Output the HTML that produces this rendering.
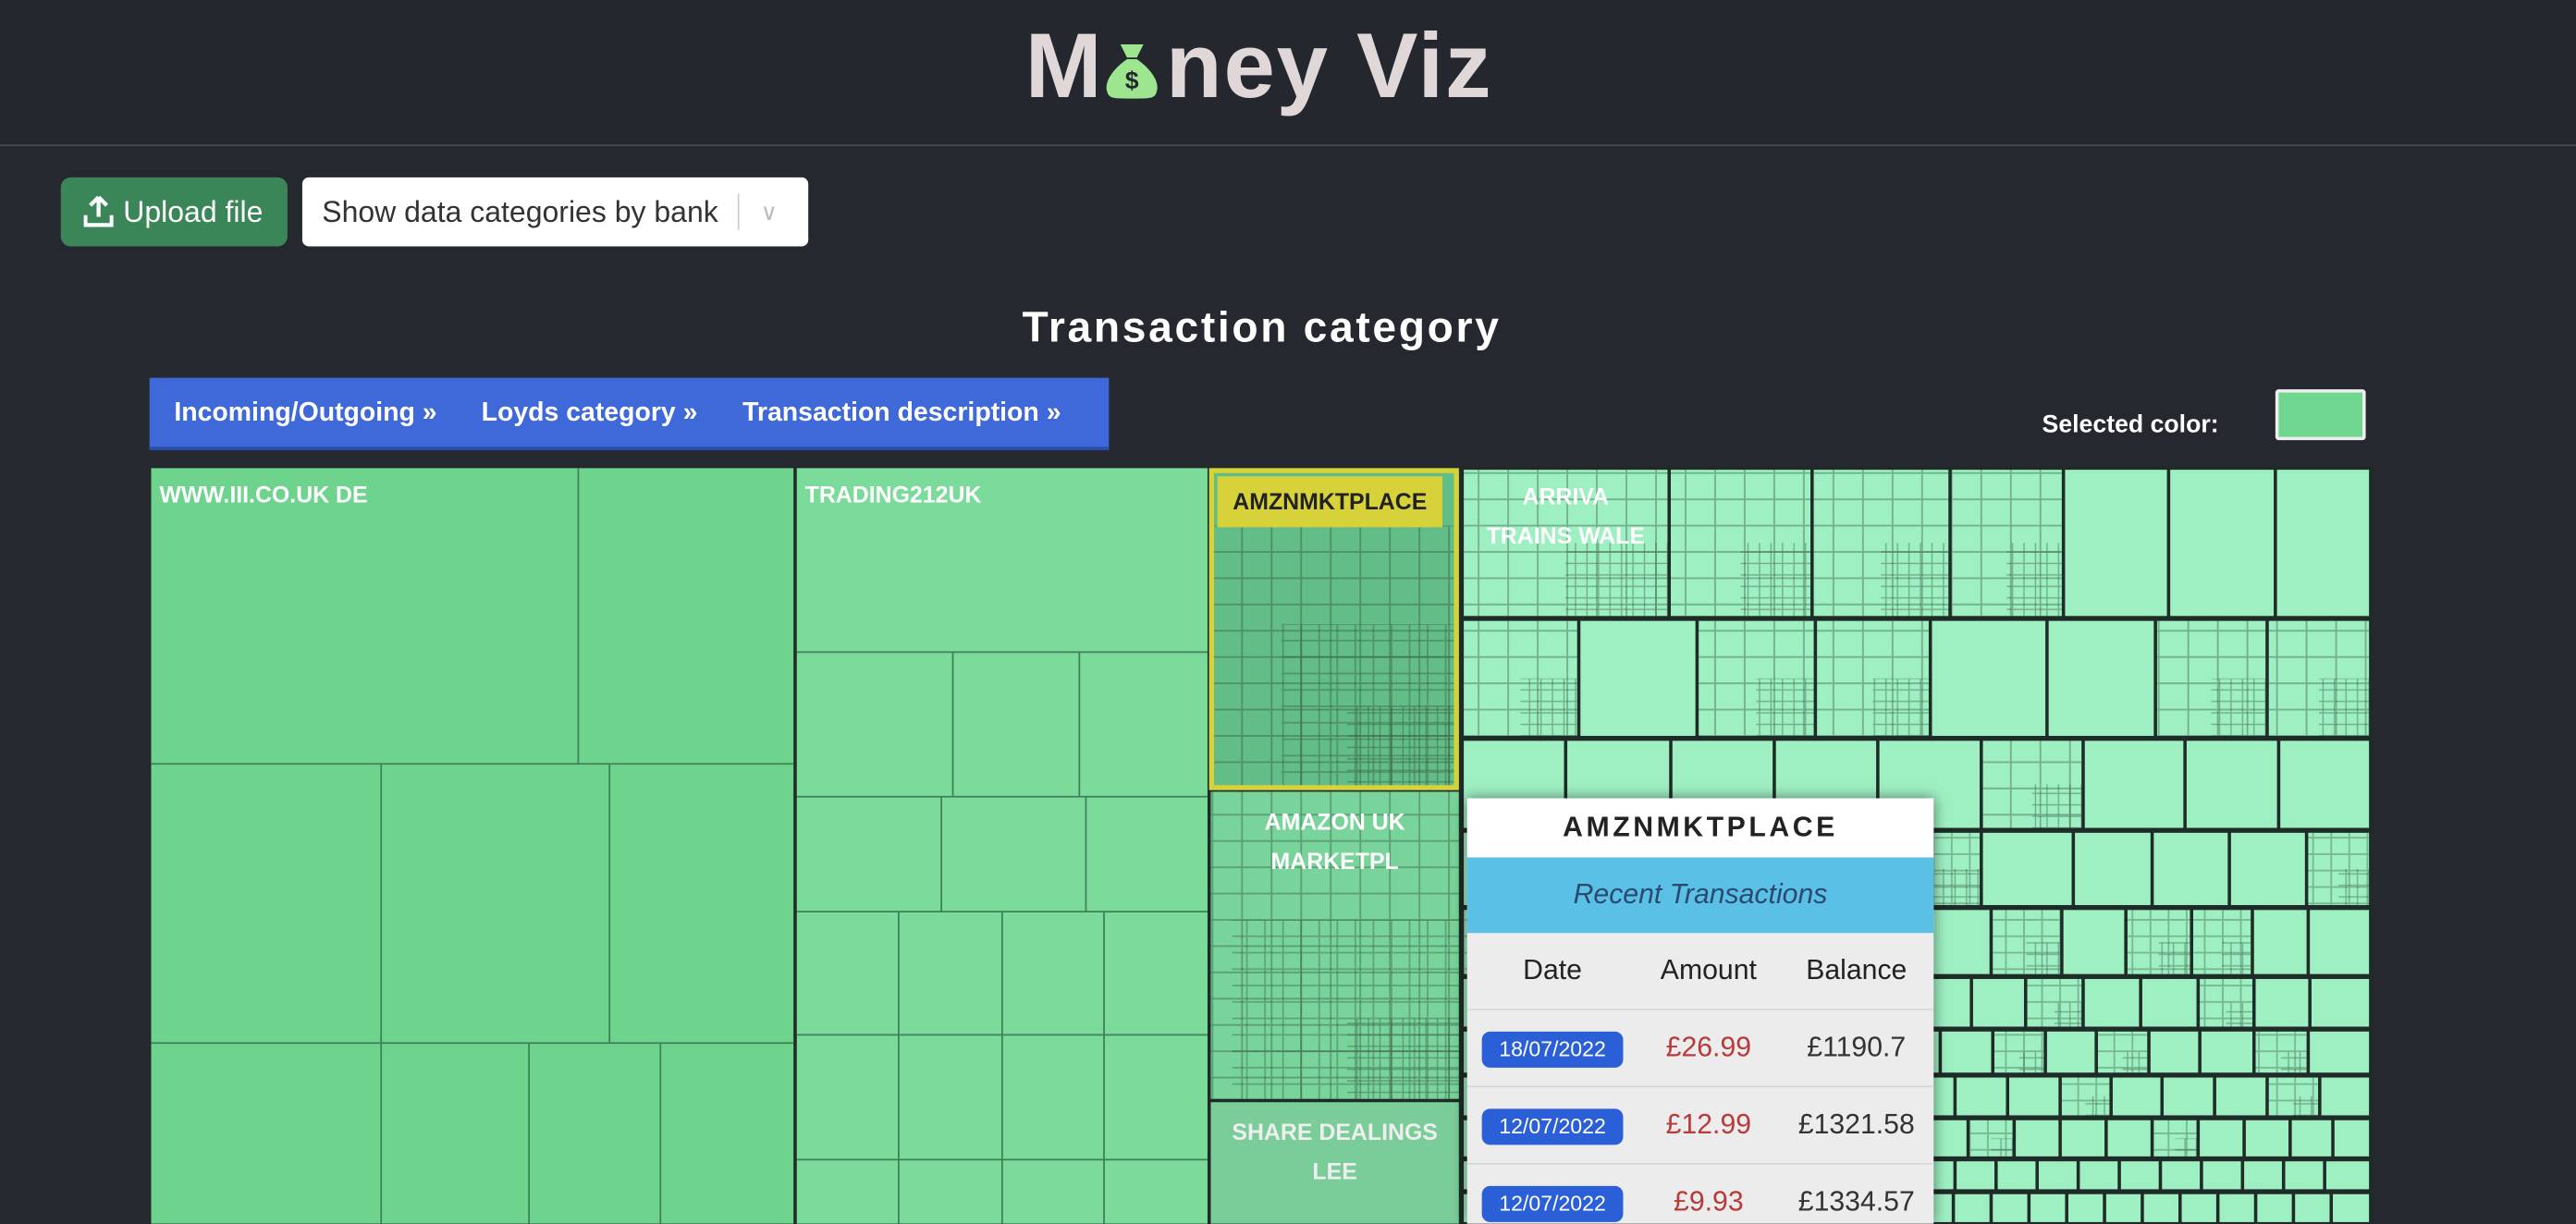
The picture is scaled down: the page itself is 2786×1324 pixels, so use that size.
<!DOCTYPE html>
<html><head><meta charset="utf-8">
<style>
html,body{margin:0;padding:0;background:#262830;overflow:hidden;width:2786px;height:1324px}
#w{position:absolute;left:0;top:0;width:1568px;height:745px;transform:scale(1.77679);transform-origin:0 0;font-family:"Liberation Sans",sans-serif;background:#262830}
.abs{position:absolute}
</style></head><body>
<div id="w">
  <div class="abs" style="left:0;top:0;width:1568px;height:88px;border-bottom:1px solid #4a4c52;background:#25272e"></div>
  <div class="abs" style="left:624px;top:7px;font-size:56px;font-weight:bold;color:#e0d8d8;letter-spacing:1px;white-space:nowrap">M<span style="display:inline-block;width:38px"></span>ney Viz</div>
  <svg class="abs" style="left:670px;top:25px" width="38" height="36" viewBox="0 0 38 36">
    <path d="M12 2 L26 2 L22 10 L16 10 Z" fill="#9de58f"/>
    <path d="M16 11 L22 11 C32 18 36 26 34 31 C33 35 30 35 19 35 C8 35 5 35 4 31 C2 26 6 18 16 11 Z" fill="#9de58f"/>
    <text x="19" y="29" font-family="Liberation Sans" font-weight="bold" font-size="15" text-anchor="middle" fill="#25272e">$</text>
  </svg>

  <div class="abs" style="left:37px;top:108px;width:138px;height:42px;background:#3b8658;border-radius:6px;color:#fff;font-size:18px;line-height:42px">
    <svg class="abs" style="left:14px;top:11px" width="18" height="20" viewBox="0 0 18 20"><path d="M9 1 L4 6 M9 1 L14 6 M9 1 L9 13" stroke="#fff" stroke-width="2.4" fill="none"/><path d="M1 12 L1 18 L17 18 L17 12" stroke="#fff" stroke-width="2.4" fill="none"/></svg>
    <span class="abs" style="left:38px;top:0">Upload file</span></div>
  <div class="abs" style="left:184px;top:108px;width:308px;height:42px;background:#fff;border-radius:4px;color:#333;font-size:18px;line-height:42px">
    <span class="abs" style="left:12px">Show data categories by bank</span>
    <div class="abs" style="left:265px;top:10px;width:1px;height:22px;background:#ccc"></div>
    <span class="abs" style="left:279px;top:0;color:#bbb;font-size:14px">&#8744;</span></div>

  <div class="abs" style="left:0;width:1536px;top:184px;text-align:center;font-size:26px;font-weight:bold;color:#fff;letter-spacing:1.5px">Transaction category</div>

  <div class="abs" style="left:91px;top:230px;width:584px;height:44px;background:#3f68d9;color:#fff;font-size:16px;font-weight:bold;line-height:44px;white-space:nowrap;border-bottom:2px solid #2a4db0;box-sizing:border-box">
    <span class="abs" style="left:15px">Incoming/Outgoing »</span>
    <span class="abs" style="left:202px">Loyds category »</span>
    <span class="abs" style="left:361px">Transaction description »</span></div>

  <div class="abs" style="left:1243px;top:250px;color:#fff;font-size:15px;font-weight:bold">Selected color:</div>
  <div class="abs" style="left:1385px;top:237px;width:51px;height:27px;background:#6fd690;border:2px solid #eee;border-radius:2px"></div>

  <svg id="tm" class="abs" style="left:0;top:0" width="1568" height="745">
    <defs>
      <pattern id="g1" width="18" height="16" patternUnits="userSpaceOnUse"><rect width="18" height="16" fill="none" stroke="#2c4a38" stroke-opacity=".4" stroke-width="1"/></pattern>
      <pattern id="g2" width="11" height="10" patternUnits="userSpaceOnUse"><rect width="11" height="10" fill="none" stroke="#2c4a38" stroke-opacity=".35" stroke-width="1"/></pattern>
      <pattern id="g3" width="7" height="7" patternUnits="userSpaceOnUse"><rect width="7" height="7" fill="none" stroke="#2c4a38" stroke-opacity=".4" stroke-width=".8"/></pattern>
    </defs>
    <rect x="91" y="284" width="1353" height="461" fill="#1f2b26"/>
    <rect x="92" y="285" width="391" height="460" fill="#6ed48d"/>
    <g stroke="#3e8058" stroke-width="1" fill="none">
      <line x1="352" y1="285" x2="352" y2="465"/><line x1="92" y1="465" x2="483" y2="465"/>
      <line x1="232" y1="465" x2="232" y2="745"/><line x1="371" y1="465" x2="371" y2="635"/>
      <line x1="92" y1="635" x2="483" y2="635"/><line x1="322" y1="635" x2="322" y2="745"/><line x1="402" y1="635" x2="402" y2="745"/>
    </g>
    <rect x="485" y="285" width="250" height="460" fill="#7bdb9b"/>
    <g stroke="#3e8058" stroke-width="1" fill="none">
      <line x1="485" y1="397" x2="735" y2="397"/><line x1="580" y1="397" x2="580" y2="485"/><line x1="657" y1="397" x2="657" y2="485"/>
      <line x1="485" y1="485" x2="735" y2="485"/><line x1="573" y1="485" x2="573" y2="555"/><line x1="661" y1="485" x2="661" y2="555"/>
      <line x1="485" y1="555" x2="735" y2="555"/><line x1="547" y1="555" x2="547" y2="745"/><line x1="610" y1="555" x2="610" y2="745"/><line x1="672" y1="555" x2="672" y2="745"/>
      <line x1="485" y1="630" x2="735" y2="630"/><line x1="485" y1="706" x2="735" y2="706"/>
    </g>
    <rect x="736" y="285" width="152" height="196" fill="#62bd86"/>
    <rect x="738" y="320" width="148" height="160" fill="url(#g1)"/>
    <rect x="780" y="380" width="106" height="100" fill="url(#g2)"/>
    <rect x="820" y="430" width="66" height="50" fill="url(#g3)"/>
    <rect x="737.5" y="286.5" width="149" height="193" fill="none" stroke="#d8d23a" stroke-width="3"/>
    <rect x="741" y="290" width="137" height="31" fill="#d8d23a"/>
    <rect x="737" y="482" width="151" height="187" fill="#78d49a"/>
    <rect x="737" y="482" width="151" height="187" fill="url(#g1)"/>
    <rect x="750" y="560" width="138" height="109" fill="url(#g2)"/>
    <rect x="820" y="620" width="68" height="49" fill="url(#g3)"/>
    <rect x="737" y="671" width="151" height="74" fill="#7acd98"/>
    <g id="right"></g>
  </svg>

  <div class="abs" style="left:97px;top:293px;color:#fff;font-size:14px;font-weight:bold">WWW.III.CO.UK DE</div>
  <div class="abs" style="left:490px;top:293px;color:#fff;font-size:14px;font-weight:bold">TRADING212UK</div>
  <div class="abs" style="left:741px;top:297px;width:137px;text-align:center;color:#222;font-size:14px;font-weight:bold">AMZNMKTPLACE</div>
  <div class="abs" style="left:890px;top:290px;width:126px;text-align:center;color:#fff;font-size:14px;font-weight:bold;line-height:24px">ARRIVA<br>TRAINS WALE</div>
  <div class="abs" style="left:737px;top:488px;width:151px;text-align:center;color:#fff;font-size:14px;font-weight:bold;line-height:24px">AMAZON UK<br>MARKETPL</div>
  <div class="abs" style="left:737px;top:677px;width:151px;text-align:center;color:#eee;font-size:14px;font-weight:bold;line-height:24px">SHARE DEALINGS<br>LEE</div>

  <div class="abs" style="left:893px;top:486px;width:284px;height:259px;background:#ececec;box-shadow:0 0 8px rgba(0,0,0,.5);overflow:hidden">
    <div style="height:36px;background:#fff;text-align:center;line-height:36px;font-size:17px;font-weight:bold;letter-spacing:2px;color:#222">AMZNMKTPLACE</div>
    <div style="height:46px;background:#5bc0e6;text-align:center;line-height:46px;font-size:17px;font-style:italic;color:#2a4a70">Recent Transactions</div>
    <div style="height:46px;line-height:46px;font-size:17px;color:#222;position:relative;border-bottom:1px solid #d8d8d8">
      <span class="abs" style="left:0;width:104px;text-align:center">Date</span>
      <span class="abs" style="left:104px;width:86px;text-align:center">Amount</span>
      <span class="abs" style="left:190px;width:94px;text-align:center">Balance</span></div>
    <div style="height:46px;line-height:46px;font-size:17px;position:relative;border-bottom:1px solid #d8d8d8">
      <span class="abs" style="left:9px;top:13px;width:86px;height:22px;line-height:22px;background:#2a5fd8;border-radius:5px;color:#fff;font-size:13px;text-align:center">18/07/2022</span>
      <span class="abs" style="left:104px;width:86px;text-align:center;color:#b83a3a">£26.99</span>
      <span class="abs" style="left:190px;width:94px;text-align:center;color:#333">£1190.7</span></div>
    <div style="height:46px;line-height:46px;font-size:17px;position:relative;border-bottom:1px solid #d8d8d8">
      <span class="abs" style="left:9px;top:13px;width:86px;height:22px;line-height:22px;background:#2a5fd8;border-radius:5px;color:#fff;font-size:13px;text-align:center">12/07/2022</span>
      <span class="abs" style="left:104px;width:86px;text-align:center;color:#b83a3a">£12.99</span>
      <span class="abs" style="left:190px;width:94px;text-align:center;color:#333">£1321.58</span></div>
    <div style="height:46px;line-height:46px;font-size:17px;position:relative">
      <span class="abs" style="left:9px;top:13px;width:86px;height:22px;line-height:22px;background:#2a5fd8;border-radius:5px;color:#fff;font-size:13px;text-align:center">12/07/2022</span>
      <span class="abs" style="left:104px;width:86px;text-align:center;color:#b83a3a">£9.93</span>
      <span class="abs" style="left:190px;width:94px;text-align:center;color:#333">£1334.57</span></div>
  </div>
</div>
<script>
var rows=[[285,376,[890,1016,1103,1187,1256,1320,1385,1443],[1,1,1,1,0,0,0]],
[377,449,[890,961,1033,1105,1175,1246,1312,1380,1443],[1,0,1,1,0,0,1,1]],
[450,505,[890,953,1017,1080,1143,1206,1268,1330,1387,1443],[0,0,0,0,0,1,0,0,0]],
[506,552,[890,958,1018,1075,1133,1206,1262,1310,1357,1404,1443],[0,0,1,0,1,0,0,0,0,1]],
[553,594,[890,945,1002,1050,1098,1150,1212,1255,1294,1334,1371,1405,1443],[1,0,1,0,1,0,1,0,1,1,0,0]],
[595,626,[890,931,970,1001,1033,1064,1096,1130,1168,1200,1233,1268,1303,1338,1372,1406,1443],[0,0,1,0,1,0,0,1,0,0,1,0,0,1,0,0]],
[627,654,[890,925,958,991,1024,1055,1087,1118,1150,1181,1213,1245,1276,1308,1339,1372,1405,1443],[0,1,0,0,1,0,0,1,0,0,1,0,1,0,0,1,0]],
[655,680,[890,920,950,980,1010,1040,1070,1100,1130,1160,1190,1222,1254,1285,1316,1348,1380,1412,1443],[0,0,1,0,0,1,0,0,1,0,0,0,1,0,0,0,1,0]],
[681,705,[890,918,946,974,1002,1030,1058,1086,1114,1142,1170,1198,1226,1254,1282,1310,1338,1366,1394,1420,1443],[0,1,0,0,1,0,0,0,1,0,0,1,0,0,0,1,0,0,0,0]],
[706,725,[890,915,940,965,990,1015,1040,1065,1090,1115,1140,1165,1190,1215,1240,1265,1290,1315,1340,1365,1390,1415,1443],[]],
[726,745,[890,913,936,959,982,1005,1028,1051,1074,1097,1120,1143,1166,1189,1212,1235,1258,1281,1304,1327,1350,1373,1396,1419,1443],[]]];
var s='';
rows.forEach(function(r){var xs=r[2];for(var i=0;i<xs.length-1;i++){var x=xs[i]+1,w=xs[i+1]-xs[i]-2,y=r[0]+1,h=r[1]-r[0]-2;
s+='<rect x="'+x+'" y="'+y+'" width="'+w+'" height="'+h+'" fill="#9ef0c3"/>';
if(r[3][i]){s+='<rect x="'+x+'" y="'+y+'" width="'+w+'" height="'+h+'" fill="url(#'+(h>50?'g1':'g2')+')"/>';
s+='<rect x="'+(x+w*0.5)+'" y="'+(y+h*0.5)+'" width="'+(w*0.5)+'" height="'+(h*0.5)+'" fill="url(#g3)"/>';}}});
document.getElementById('right').innerHTML=s;
</script>
</body></html>
